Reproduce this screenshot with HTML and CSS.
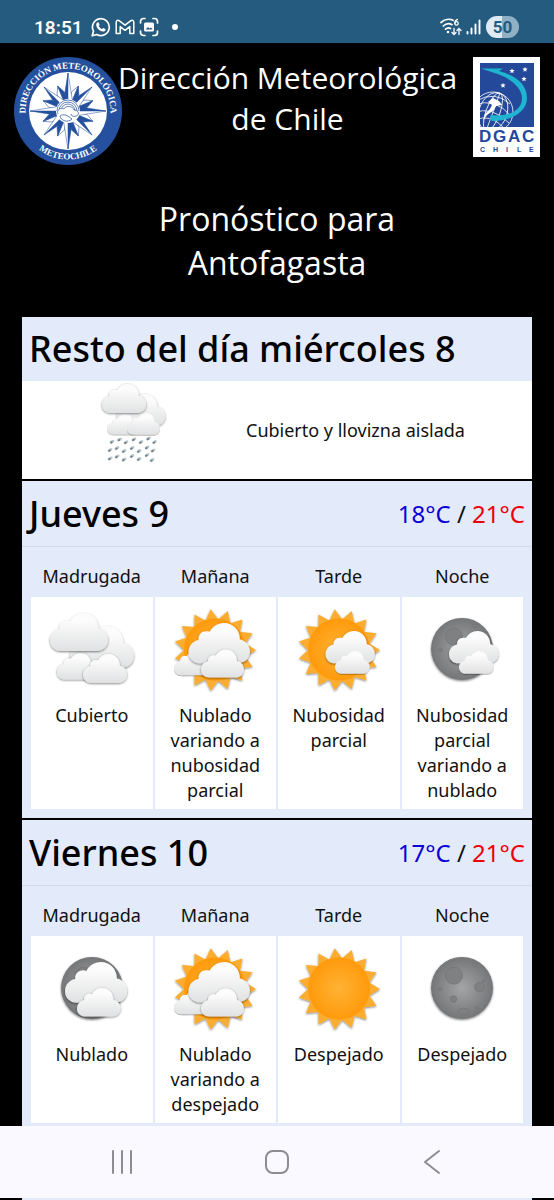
FILE: index.html
```html
<!DOCTYPE html>
<html lang="es">
<head>
    <meta charset="UTF-8">
    <meta name="viewport" content="width=device-width, initial-scale=1.0">
    <title>Dirección Meteorológica de Chile - Pronóstico para Antofagasta</title>
    <link rel="stylesheet" href="styles.css">
</head>
<body>
    <!-- Shared shapes for the weather icons -->
    <svg class="sprite" width="0" height="0" aria-hidden="true">
        <defs>
            <linearGradient id="cloudFill" x1="0" y1="0" x2="0" y2="1">
                <stop offset="0.2" stop-color="#fcfcfc"/>
                <stop offset="1" stop-color="#e0e1e2"/>
            </linearGradient>
            <radialGradient id="sunFill">
                <stop offset="0" stop-color="#ffb234"/>
                <stop offset="1" stop-color="#ff9a0c"/>
            </radialGradient>
            <radialGradient id="moonFill">
                <stop offset="0" stop-color="#a3a5a7"/>
                <stop offset="1" stop-color="#747678"/>
            </radialGradient>
            <filter id="shadow" x="-20%" y="-20%" width="140%" height="150%">
                <feDropShadow dx="0" dy="1" stdDeviation="1.2" flood-color="#000" flood-opacity="0.5"/>
            </filter>
            <g id="cloud" filter="url(#shadow)">
                <path fill="url(#cloudFill)" d="M11 38C5 38 0 33.500 0 27.500C0 21.500 4 17 9.500 16C9 10 14 6.500 20 8.300C22.500 3.500 27.500 0 33.500 0C42 0 48.500 6.500 48.500 15.500C54 16.500 58 21 58 27C58 33.500 53 38 46.500 38Z"/>
            </g>
            <g id="sun" filter="url(#shadow)">
                <polygon fill="#fbad31" points="91,50 80.3,56.4 87.5,66.7 75.1,68.2 77.4,80.5 65.5,76.8 62.7,89 53.3,80.8 45.7,90.8 40.4,79.5 29.5,85.5 29.3,73 16.8,74.1 21.7,62.6 9.9,58.5 19,50 9.9,41.5 21.7,37.4 16.8,25.9 29.3,27 29.5,14.5 40.4,20.5 45.7,9.2 53.3,19.2 62.7,11 65.5,23.2 77.4,19.5 75.1,31.8 87.5,33.3 80.3,43.6"/>
                <circle cx="50" cy="49.500" r="31" fill="url(#sunFill)"/>
            </g>
            <g id="moon">
                <circle cx="50" cy="49" r="31" fill="url(#moonFill)" filter="url(#shadow)"/>
                <g fill="#7f8082" stroke="#6f7072" stroke-width="0.6">
                    <circle cx="42" cy="36.700" r="8.500"/>
                    <circle cx="67.500" cy="48" r="4.800"/>
                    <circle cx="41.500" cy="60" r="3.200"/>
                    <ellipse cx="51.500" cy="72.300" rx="5.800" ry="3"/>
                    <circle cx="62.500" cy="26" r="1.800"/>
                    <circle cx="28.500" cy="50" r="1.700"/>
                    <circle cx="71.500" cy="42" r="1.200"/>
                    <circle cx="65" cy="69" r="1.500"/>
                </g>
            </g>
            <g id="drop">
                <ellipse rx="2.600" ry="1.500" transform="rotate(-30)" fill="#b9c6cc"/>
                <ellipse cx="-0.800" cy="0.300" rx="1.400" ry="1" transform="rotate(-30)" fill="#6d838e"/>
            </g>
            <symbol id="icon-cubierto" viewBox="0 0 100 100">
                <use href="#cloud" transform="translate(28 26) scale(1.1)"/>
                <use href="#cloud" transform="translate(15 53) scale(0.7)"/>
                <use href="#cloud" transform="translate(41 54) scale(0.76)"/>
                <use href="#cloud" transform="translate(8 13)"/>
            </symbol>
            <symbol id="icon-sol-nublado" viewBox="0 0 100 100">
                <use href="#sun"/>
                <use href="#cloud" transform="translate(9 51) scale(0.64)"/>
                <use href="#cloud" transform="translate(23.500 23) scale(1.06)"/>
                <use href="#cloud" transform="translate(36 49.500) scale(0.74)"/>
            </symbol>
            <symbol id="icon-sol-parcial" viewBox="0 0 100 100">
                <use href="#sun"/>
                <use href="#cloud" transform="translate(36.500 31) scale(0.85)"/>
                <use href="#cloud" transform="translate(46 51) scale(0.6)"/>
            </symbol>
            <symbol id="icon-sol" viewBox="0 0 100 100">
                <use href="#sun"/>
            </symbol>
            <symbol id="icon-luna-parcial" viewBox="0 0 100 100">
                <use href="#moon"/>
                <use href="#cloud" transform="translate(37 31) scale(0.85)"/>
                <use href="#cloud" transform="translate(47 51) scale(0.6)"/>
            </symbol>
            <symbol id="icon-luna-nublado" viewBox="0 0 100 100">
                <use href="#moon"/>
                <use href="#cloud" transform="translate(23 23) scale(1.07)"/>
                <use href="#cloud" transform="translate(35 49) scale(0.75)"/>
            </symbol>
            <symbol id="icon-luna" viewBox="0 0 100 100">
                <use href="#moon"/>
            </symbol>
            <symbol id="icon-llovizna" viewBox="0 6 90 98">
                <use href="#cloud" transform="translate(28 19) scale(0.83)"/>
                <use href="#cloud" transform="translate(18 39) scale(0.54)"/>
                <use href="#drop" x="23" y="66.700"/><use href="#drop" x="30.500" y="64.500"/><use href="#drop" x="37" y="67.300"/><use href="#drop" x="45" y="64.300"/><use href="#drop" x="52" y="67"/><use href="#drop" x="59.500" y="63.500"/><use href="#drop" x="65.500" y="67"/>
                <use href="#drop" x="21" y="75"/><use href="#drop" x="28" y="73"/><use href="#drop" x="35" y="76"/><use href="#drop" x="43" y="73"/><use href="#drop" x="50" y="76"/><use href="#drop" x="58" y="72.500"/><use href="#drop" x="64" y="75.500"/>
                <use href="#drop" x="21" y="83.500"/><use href="#drop" x="28" y="81.500"/><use href="#drop" x="35" y="84.500"/><use href="#drop" x="43" y="81"/><use href="#drop" x="50" y="84"/><use href="#drop" x="58" y="80"/><use href="#drop" x="63" y="85"/>
                <use href="#cloud" transform="translate(38 38) scale(0.57)"/>
                <use href="#cloud" transform="translate(13 9) scale(0.76)"/>
            </symbol>
            <g id="ray-long" stroke="#24509e" stroke-width="0.5">
                <path d="M54 16L49.500 44L54 54Z" fill="#24509e"/>
                <path d="M54 16L58.500 44L54 54Z" fill="#fff"/>
            </g>
            <g id="ray-diagonal" stroke="#24509e" stroke-width="0.5">
                <path d="M54 20L49.500 43L54 54Z" fill="#24509e"/>
                <path d="M54 20L58.500 43L54 54Z" fill="#fff"/>
            </g>
            <g id="ray-short" stroke="#24509e" stroke-width="0.5">
                <path d="M54 27L50 35L54 54Z" fill="#fff"/>
                <path d="M54 27L58 35L54 54Z" fill="#24509e"/>
            </g>
            <path id="star" d="M0-2.800L0.700-0.900L2.700-0.900L1.100 0.400L1.700 2.300L0 1.200L-1.700 2.300L-1.100 0.400L-2.700-0.900L-0.700-0.900Z" fill="#fff"/>
        </defs>
    </svg>

    <div class="status-bar">
        <span class="status-time">18:51</span>
        <svg class="status-icon" width="20" height="20" viewBox="0 0 20 20" fill="none" stroke="#fff" stroke-width="1.7">
            <path d="M1.200 18.800L2.500 14.200A8.400 8.400 0 1 1 5.800 17.500Z" stroke-linejoin="round"/>
            <path d="M6.300 5.600C7.400 4.900 7.800 5.800 8.500 7.700C8.600 8.200 7.700 8.800 7.800 9.100C8.500 10.600 9.500 11.500 11 12.100C11.400 12.200 12 11 12.500 11.100L14.600 12.200C14.600 13.700 13.300 14.600 11.900 14.500C8.200 13.900 5.500 11 5.200 8C5.200 7 5.600 6 6.300 5.600Z" fill="#fff" stroke="none"/>
        </svg>
        <svg class="status-icon" width="20" height="20" viewBox="0 0 20 20" fill="none" stroke="#fff" stroke-width="1.500" stroke-linejoin="round">
            <path d="M1.200 16.500V5.200C1.200 3.200 3 2.800 4.400 3.800L10 8.200L15.600 3.800C17 2.800 18.800 3.200 18.800 5.200V16.500H14.800V9.600L10 13.300L5.200 9.600V16.500Z"/>
        </svg>
        <svg class="status-icon" width="20" height="20" viewBox="0 0 20 20" fill="none" stroke="#fff" stroke-width="1.700" stroke-linecap="round">
            <path d="M1.500 6V4.500A3 3 0 0 1 4.500 1.500H6M14 1.500H15.500A3 3 0 0 1 18.500 4.500V6M18.500 14V15.500A3 3 0 0 1 15.500 18.500H14M6 18.500H4.500A3 3 0 0 1 1.500 15.500V14"/>
            <rect x="5" y="5.500" width="10" height="9" rx="1.500" fill="#fff" stroke="none"/>
            <path d="M6.500 12.500L9 10L10.500 11.500L12 10.500L13.500 12.500Z" fill="#255b7f" stroke="none"/>
        </svg>
        <span class="status-dot"></span>
        <svg class="status-wifi" width="22" height="18" viewBox="0 0 22 18" fill="none" stroke="#fff" stroke-width="1.700" stroke-linecap="round">
            <path d="M1 4.500C4.500 1.300 9.500 0.700 13 2.300M3.300 8C5.800 5.600 9.300 5.200 12 6.700M5.500 11.200C7 9.800 9 9.600 10.500 10.500"/>
            <circle cx="8" cy="14" r="1.300" fill="#fff" stroke="none"/>
            <path d="M17.500 1.400C15.500 2 14.800 3.500 14.800 5.300" stroke-width="1.300"/>
            <circle cx="16.500" cy="5.400" r="1.700" stroke-width="1.300"/>
            <path d="M14 10.500V16M12 14.500L14 16.500L16 14.500M19 16.500V10.500M17 12.500L19 10.500L21 12.500" stroke-width="1.300"/>
        </svg>
        <svg class="status-signal" width="15" height="16" viewBox="0 0 15 16" stroke="#fff" stroke-width="1.900" stroke-linecap="round">
            <path d="M1.500 13V14.500M5.500 9.500V14.500M9.500 5.500V14.500M13.500 1.500V14.500"/>
        </svg>
        <span class="battery">50</span>
    </div>

    <header class="site-header">
        <svg class="logo-meteo" viewBox="0 0 108 108" role="img" aria-label="Meteochile">
            <defs>
                <path id="arcTop" d="M11.500 54A42.500 42.500 0 0 1 96.500 54"/>
                <path id="arcBottom" d="M5.500 54A48.500 48.500 0 0 0 102.500 54"/>
            </defs>
            <circle cx="54" cy="54" r="54" fill="#24509e"/>
            <circle cx="54" cy="54" r="39" fill="#fff"/>
            <use href="#ray-short" transform="rotate(22.500 54 54)"/>
            <use href="#ray-short" transform="rotate(67.500 54 54)"/>
            <use href="#ray-short" transform="rotate(112.500 54 54)"/>
            <use href="#ray-short" transform="rotate(157.500 54 54)"/>
            <use href="#ray-short" transform="rotate(202.500 54 54)"/>
            <use href="#ray-short" transform="rotate(247.500 54 54)"/>
            <use href="#ray-short" transform="rotate(292.500 54 54)"/>
            <use href="#ray-short" transform="rotate(337.500 54 54)"/>
            <use href="#ray-diagonal" transform="rotate(45 54 54)"/>
            <use href="#ray-diagonal" transform="rotate(135 54 54)"/>
            <use href="#ray-diagonal" transform="rotate(225 54 54)"/>
            <use href="#ray-diagonal" transform="rotate(315 54 54)"/>
            <use href="#ray-long"/>
            <use href="#ray-long" transform="rotate(90 54 54)"/>
            <use href="#ray-long" transform="rotate(180 54 54)"/>
            <use href="#ray-long" transform="rotate(270 54 54)"/>
            <circle cx="54" cy="54" r="12" fill="#fff"/>
            <g fill="none" stroke="#24509e" stroke-width="0.700">
                <path d="M43 54A11 11 0 0 1 65 54M45 54A9 9 0 0 1 63 54M47 54A7 7 0 0 1 61 54"/>
                <path d="M44 57C42 53 47 50 50 52C52 48 59 49 60 53C65 53 66 58 62 59C60 60 57 59 57 57M46 59C50 56 54 59 58 62C54 66 47 64 46 59Z" fill="#fff"/>
            </g>
            <text class="seal-text"><textPath href="#arcTop" startOffset="50%">DIRECCIÓN METEOROLÓGICA</textPath></text>
            <text class="seal-text"><textPath href="#arcBottom" startOffset="50%">METEOCHILE</textPath></text>
        </svg>
        <h1>Dirección Meteorológica de Chile</h1>
        <svg class="logo-dgac" viewBox="0 0 67 100" role="img" aria-label="DGAC Chile">
            <defs>
                <clipPath id="flag"><rect x="7" y="6" width="54" height="64"/></clipPath>
            </defs>
            <rect width="67" height="100" fill="#fff"/>
            <rect x="7" y="6" width="54" height="64" fill="#24489a"/>
            <g clip-path="url(#flag)" fill="none" stroke="#fff" stroke-width="0.800">
                <circle cx="20" cy="55" r="20"/>
                <ellipse cx="20" cy="55" rx="14" ry="20" transform="rotate(20 20 55)"/>
                <ellipse cx="20" cy="55" rx="7" ry="20" transform="rotate(20 20 55)"/>
                <path d="M27 36L13 74M1 48Q22 40 38 59M3 44Q22 33 37 47M1 56Q18 48 36 66M2 63Q17 56 31 71"/>
                <path d="M15 45L20 41L26 44L29 48L23 49L21 53L14 58L10 64L12 57L17 52L19 48Z" fill="#fff" stroke="none"/>
            </g>
            <path d="M8 11.500L30 11.500L26 14C42 18 54 27 54 41C54 55 38 64 20 64C16 63 16 61 18 58C35 60 49 54 49 41C49 30 36 20 20 15.500Z" fill="#1fb4cf"/>
            <use href="#star" x="39" y="14"/>
            <use href="#star" x="52" y="12.500"/>
            <use href="#star" x="51" y="22"/>
            <use href="#star" x="30" y="28.500"/>
            <text class="dgac-name" x="6 20 35 49" y="85">DGAC</text>
            <text class="dgac-country" x="7 20 33 44 56" y="95">CHILE</text>
        </svg>
    </header>

    <main>
        <h2 class="city-title">Pronóstico para<br>Antofagasta</h2>

        <div class="forecast">
            <section class="day">
                <div class="day-header">
                    <h3>Resto del día miércoles 8</h3>
                </div>
                <div class="today">
                    <svg class="today-icon" aria-hidden="true"><use href="#icon-llovizna"/></svg>
                    <p>Cubierto y llovizna aislada</p>
                </div>
            </section>

            <section class="day">
                <div class="day-header with-line">
                    <h3>Jueves 9</h3>
                    <p class="temps"><span class="min">18°C</span> / <span class="max">21°C</span></p>
                </div>
                <table class="periods">
                    <tr>
                        <th>Madrugada</th>
                        <th>Mañana</th>
                        <th>Tarde</th>
                        <th>Noche</th>
                    </tr>
                    <tr>
                        <td><svg class="weather-icon" aria-hidden="true"><use href="#icon-cubierto"/></svg>Cubierto</td>
                        <td><svg class="weather-icon" aria-hidden="true"><use href="#icon-sol-nublado"/></svg>Nublado variando a nubosidad parcial</td>
                        <td><svg class="weather-icon" aria-hidden="true"><use href="#icon-sol-parcial"/></svg>Nubosidad parcial</td>
                        <td><svg class="weather-icon" aria-hidden="true"><use href="#icon-luna-parcial"/></svg>Nubosidad parcial variando a nublado</td>
                    </tr>
                </table>
            </section>

            <section class="day">
                <div class="day-header with-line">
                    <h3>Viernes 10</h3>
                    <p class="temps"><span class="min">17°C</span> / <span class="max">21°C</span></p>
                </div>
                <table class="periods">
                    <tr>
                        <th>Madrugada</th>
                        <th>Mañana</th>
                        <th>Tarde</th>
                        <th>Noche</th>
                    </tr>
                    <tr>
                        <td><svg class="weather-icon" aria-hidden="true"><use href="#icon-luna-nublado"/></svg>Nublado</td>
                        <td><svg class="weather-icon" aria-hidden="true"><use href="#icon-sol-nublado"/></svg>Nublado variando a despejado</td>
                        <td><svg class="weather-icon" aria-hidden="true"><use href="#icon-sol"/></svg>Despejado</td>
                        <td><svg class="weather-icon" aria-hidden="true"><use href="#icon-luna"/></svg>Despejado</td>
                    </tr>
                </table>
            </section>
        </div>
    </main>

    <nav class="system-nav">
        <button type="button" aria-label="Recientes">
            <svg width="26" height="26" viewBox="0 0 26 26"><path d="M4 2V24M13 2V24M22 2V24"/></svg>
        </button>
        <button type="button" aria-label="Inicio">
            <svg width="26" height="26" viewBox="0 0 26 26"><rect x="2" y="2" width="22" height="22" rx="7"/></svg>
        </button>
        <button type="button" aria-label="Atrás">
            <svg width="26" height="26" viewBox="0 0 26 26"><path d="M20 2L6 13L20 24"/></svg>
        </button>
    </nav>
</body>
</html>
```

FILE: styles.css
```css
:root {
    --status-color: #255b7f;
    --panel-color: #e3eafa;
    --line-color: #d3daeb;
    --nav-color: #f9f9ff;
    --min-color: #0b00d6;
    --max-color: #ee0008;
}

* {
    box-sizing: border-box;
}

body {
    font-family: "Noto Sans", "Open Sans", sans-serif;
    font-size: 18px;
    line-height: 25px;
    margin: 0;
    height: 100vh;
    overflow: hidden;
    display: flex;
    flex-direction: column;
    background-color: #000;
    color: #111;
}

h1, h2, h3, p {
    margin: 0;
}

.sprite {
    position: absolute;
}

/* Status bar */
.status-bar {
    height: 43px;
    flex-shrink: 0;
    padding: 11px 35px 0 34px;
    display: flex;
    align-items: center;
    background-color: var(--status-color);
    color: #fff;
    font-family: Roboto, sans-serif;
}

.status-time {
    font-size: 19px;
    font-weight: 600;
    margin-right: 8px;
}

.status-icon {
    margin-right: 4px;
}

.status-dot {
    width: 6px;
    height: 6px;
    border-radius: 50%;
    background-color: #fff;
    margin-left: 9px;
}

.status-wifi {
    margin-left: auto;
}

.status-signal {
    margin: 0 5px 0 4px;
}

.battery {
    width: 33px;
    border-radius: 11px;
    background: linear-gradient(to right, #deebf5 50%, #8fb0c5 50%);
    color: var(--status-color);
    font-size: 17px;
    font-weight: 700;
    line-height: 22px;
    text-align: center;
}

/* Header */
.site-header {
    display: flex;
    align-items: flex-start;
    padding: 14px 14px 0;
    color: #fff;
}

/* the title runs a little into the round corners of the seal */
.site-header h1 {
    flex: 1;
    margin: 0 12px 0 -8px;
    font-family: "Open Sans", sans-serif;
    font-size: 30px;
    font-weight: 400;
    line-height: 41px;
    text-align: center;
}

.logo-meteo {
    width: 108px;
    height: 108px;
    flex-shrink: 0;
}

.logo-dgac {
    width: 67px;
    height: 100px;
    flex-shrink: 0;
}

.seal-text {
    fill: #fff;
    font-family: "Liberation Serif", serif;
    font-size: 9px;
    font-weight: 700;
    text-anchor: middle;
}

.dgac-name {
    fill: #24489a;
    font-family: "Liberation Sans", sans-serif;
    font-size: 17px;
    font-weight: 700;
}

.dgac-country {
    fill: #24489a;
    font-family: "Liberation Sans", sans-serif;
    font-size: 7px;
    font-weight: 700;
}

.city-title {
    color: #fff;
    font-family: "Open Sans", sans-serif;
    font-size: 32px;
    font-weight: 400;
    line-height: 44px;
    text-align: center;
    padding: 32px 0;
}

/* Forecast */
main {
    flex: 1;
    display: flex;
    flex-direction: column;
}

.forecast {
    flex: 1;
    margin: 0 22px;
    background-color: var(--panel-color);
}

.day + .day {
    border-top: 2px solid #000;
}

.day-header {
    display: flex;
    justify-content: space-between;
    align-items: center;
    height: 64px;
    padding: 0 7px;
}

.with-line {
    height: 66px;
    border-bottom: 1px solid var(--line-color);
}

.day-header h3 {
    color: #000;
    font-size: 36px;
    font-weight: 500;
    line-height: 44px;
}

.temps {
    font-size: 24px;
    line-height: 32px;
}

.min {
    color: var(--min-color);
}

.max {
    color: var(--max-color);
}

.today {
    display: flex;
    justify-content: space-evenly;
    align-items: center;
    background-color: #fff;
}

.today-icon {
    width: 90px;
    height: 98px;
}

.periods {
    width: calc(100% - 16px);
    margin: 0 8px;
    padding-bottom: 9px;
    table-layout: fixed;
    border-spacing: 0;
    text-align: center;
}

.periods th {
    height: 50px;
    padding: 8px 0 0;
    font-weight: 400;
}

.periods td {
    padding: 3px 8px 6px;
    vertical-align: top;
    background-color: #fff;
    border: solid var(--panel-color);
    border-width: 0 1px;
}

.weather-icon {
    display: block;
    width: 100px;
    height: 100px;
    margin: 0 auto 3px;
}

/* Navigation buttons float over the end of the page */
.system-nav {
    position: fixed;
    left: 0;
    right: 0;
    bottom: 2px;
    height: 72px;
    padding: 0 8%;
    display: grid;
    grid-template-columns: repeat(3, 1fr);
    background-color: var(--nav-color);
}

.system-nav button {
    border: none;
    background: none;
    padding: 0;
    display: flex;
    align-items: center;
    justify-content: center;
}

.system-nav svg {
    fill: none;
    stroke: #8c8c92;
    stroke-width: 2;
    stroke-linecap: round;
    stroke-linejoin: round;
}
```
